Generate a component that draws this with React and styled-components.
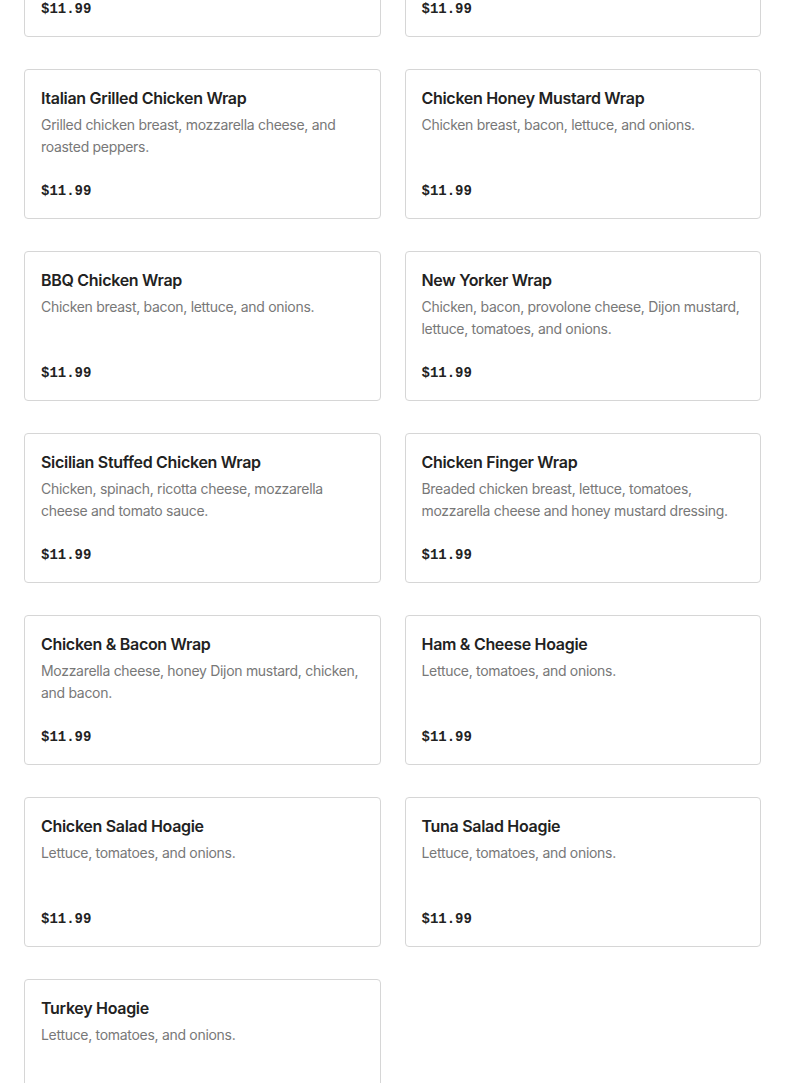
import React from "react";
import styled, { createGlobalStyle } from "styled-components";

const Global = createGlobalStyle`
  html, body { margin: 0; padding: 0; background: #fff; }
  body { font-family: Inter, "Liberation Sans", sans-serif; -webkit-font-smoothing: antialiased; }
  * { box-sizing: border-box; }
`;

const Page = styled.div`
  padding: 0 24px 40px;
  margin-top: -113px;
`;

const Grid = styled.div`
  display: grid;
  grid-template-columns: 1fr 1fr;
  column-gap: 24px;
  row-gap: 32px;
`;

const Card = styled.div`
  height: 150px;
  border: 1px solid #d6d6d6;
  border-radius: 4px;
  padding: 16px 16px 15px;
  display: flex;
  flex-direction: column;
  background: #fff;
`;

const Title = styled.h3`
  margin: 0;
  font-size: 16px;
  line-height: 24px;
  font-weight: 600;
  color: #222;
  letter-spacing: -0.3px;
`;

const Desc = styled.p`
  margin: 4px 0 0;
  font-size: 14px;
  line-height: 22px;
  font-weight: 400;
  color: #787878;
  letter-spacing: -0.3px;
`;

const Price = styled.div`
  margin-top: auto;
  font-family: "Liberation Mono", "DejaVu Sans Mono", monospace;
  font-weight: 700;
  font-size: 14px;
  line-height: 24px;
  color: #222;
`;

const items = [
  ["Buffalo Chicken Wrap", "Chicken, buffalo sauce, lettuce, and tomatoes."],
  ["Chicken Caesar Wrap", "Chicken, romaine lettuce, and Caesar dressing."],
  ["Italian Grilled Chicken Wrap", "Grilled chicken breast, mozzarella cheese, and roasted peppers."],
  ["Chicken Honey Mustard Wrap", "Chicken breast, bacon, lettuce, and onions."],
  ["BBQ Chicken Wrap", "Chicken breast, bacon, lettuce, and onions."],
  ["New Yorker Wrap", "Chicken, bacon, provolone cheese, Dijon mustard, lettuce, tomatoes, and onions."],
  ["Sicilian Stuffed Chicken Wrap", "Chicken, spinach, ricotta cheese, mozzarella cheese and tomato sauce."],
  ["Chicken Finger Wrap", "Breaded chicken breast, lettuce, tomatoes, mozzarella cheese and honey mustard dressing."],
  ["Chicken & Bacon Wrap", "Mozzarella cheese, honey Dijon mustard, chicken, and bacon."],
  ["Ham & Cheese Hoagie", "Lettuce, tomatoes, and onions."],
  ["Chicken Salad Hoagie", "Lettuce, tomatoes, and onions."],
  ["Tuna Salad Hoagie", "Lettuce, tomatoes, and onions."],
  ["Turkey Hoagie", "Lettuce, tomatoes, and onions."],
];

export default function App() {
  return (
    <>
      <Global />
      <Page>
        <Grid>
          {items.map(([name, desc]) => (
            <Card key={name}>
              <Title>{name}</Title>
              <Desc>{desc}</Desc>
              <Price>$11.99</Price>
            </Card>
          ))}
        </Grid>
      </Page>
    </>
  );
}
